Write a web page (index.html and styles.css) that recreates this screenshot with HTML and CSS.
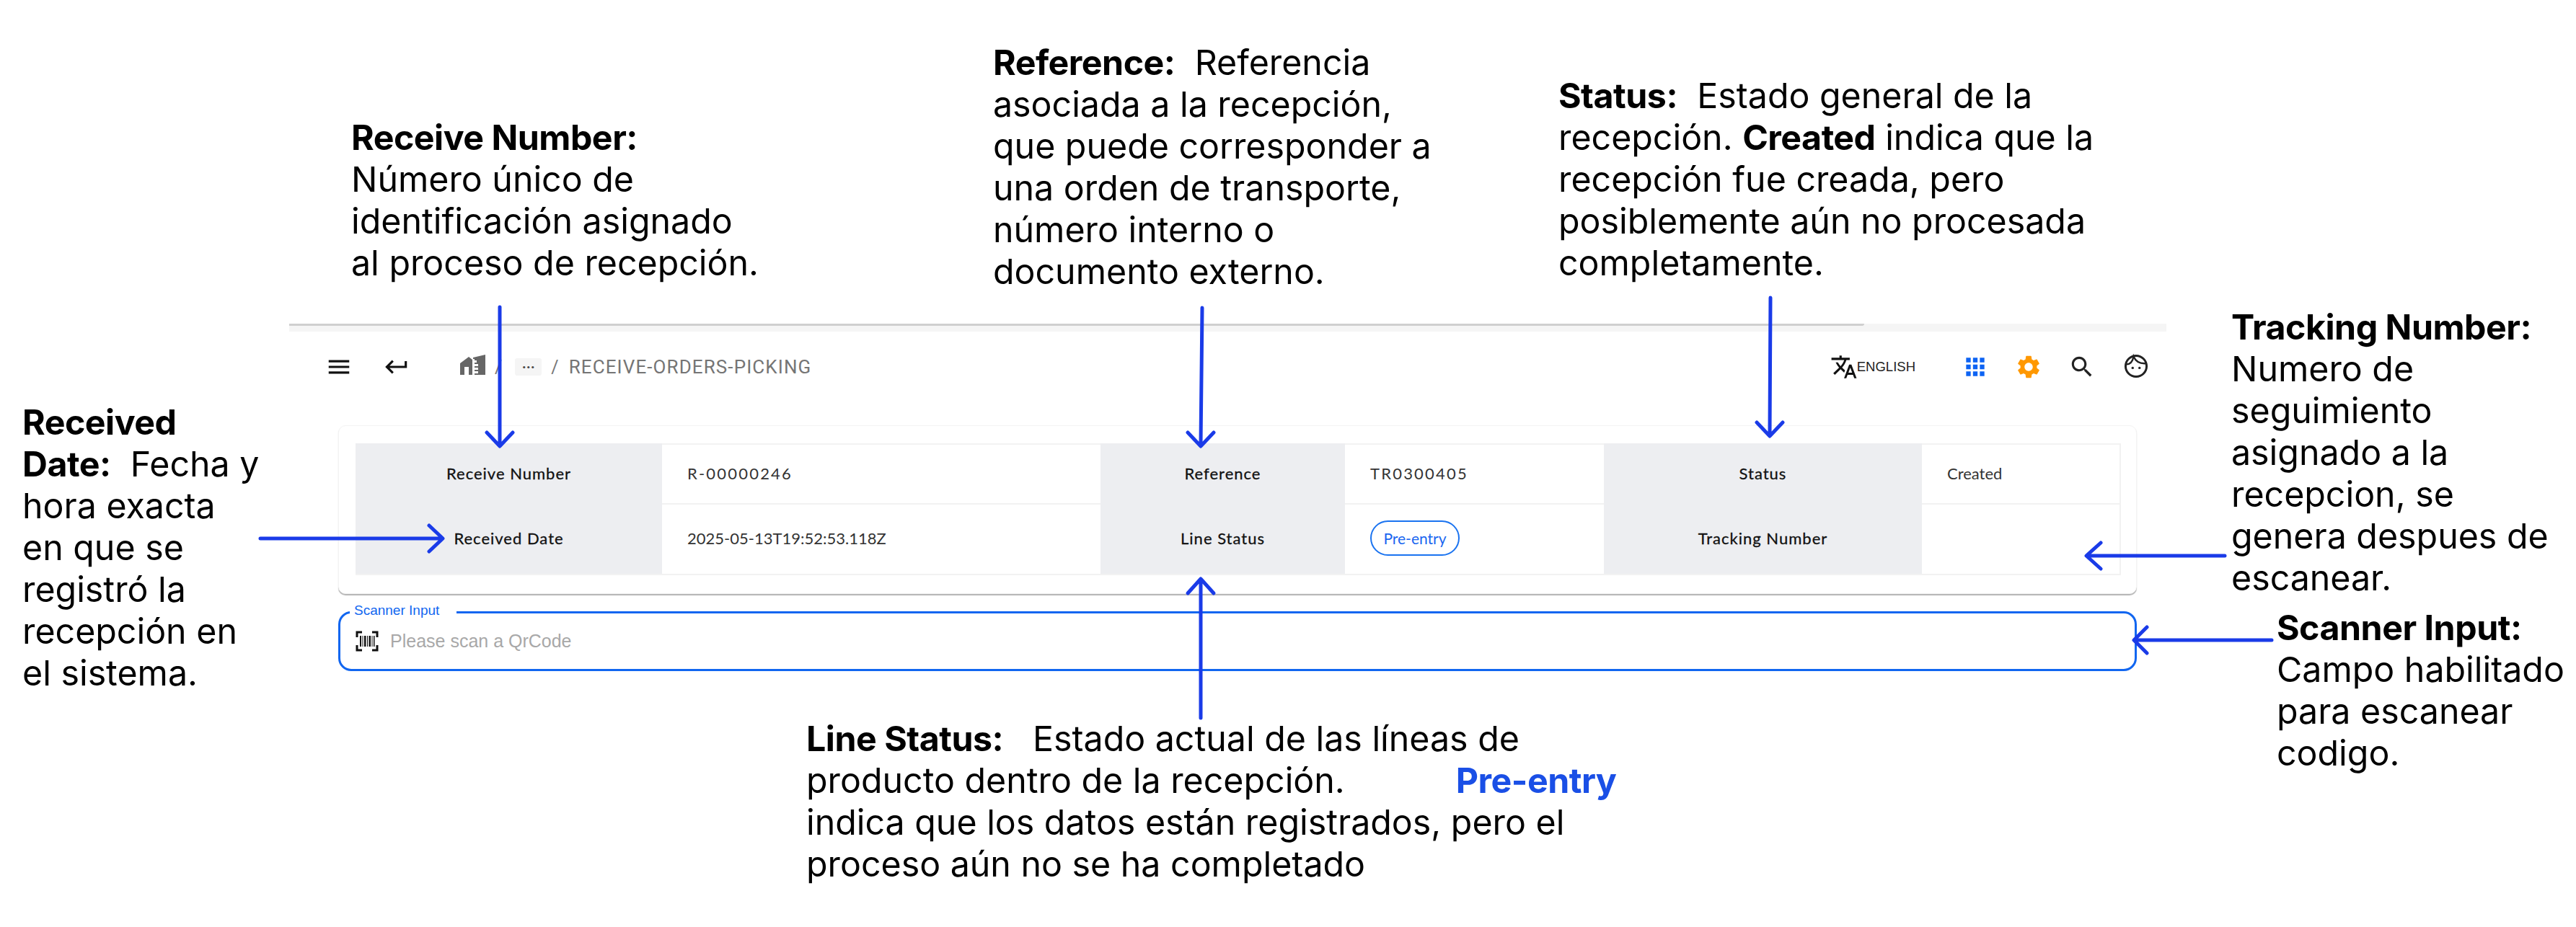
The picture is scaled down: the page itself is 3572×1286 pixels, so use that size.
FILE: index.html
```html
<!DOCTYPE html>
<html lang="es">
<head>
<meta charset="utf-8">
<title>Receive Orders Picking</title>
<link rel="stylesheet" href="styles.css">
</head>
<body>
<main class="canvas">
  <section class="app">
    <div class="topband"></div>
    <header class="nav">
      <svg class="icon" viewBox="0 0 24 24"><path d="M3 18h18v-2H3v2zm0-5h18v-2H3v2zm0-7v2h18V6H3z"/></svg>
      <svg class="icon back" viewBox="0 0 24 24"><path d="M19 7v4H5.83l3.58-3.59L8 6l-6 6 6 6 1.41-1.41L5.83 13H21V7z"/></svg>
      <svg class="home" viewBox="0 0 35 28"><path class="home-fill" d="M0 28V12L12 3l5 4v21h-5V17H6v11zM18 6l0-2L35 0v28H20v-2h5v-3h-5v-2h5v-3h-5v-2h5v-3h-5v-2h3v-3h-3V6z"/></svg>
      <span class="slash first">/</span>
      <span class="dots">···</span>
      <span class="slash">/</span>
      <span class="crumb">RECEIVE-ORDERS-PICKING</span>
      <div class="tools">
        <svg class="icon" viewBox="0 0 24 24"><path d="M12.87 15.07l-2.54-2.51.03-.03c1.74-1.94 2.98-4.17 3.71-6.53H17V4h-7V2H8v2H1v1.99h11.17C11.5 7.92 10.44 9.75 9 11.35 8.07 10.32 7.3 9.19 6.69 8h-2c.73 1.63 1.73 3.17 2.98 4.56l-5.09 5.02L4 19l5-5 3.11 3.11.76-2.04zM18.5 10h-2L12 22h2l1.12-3h4.75L21 22h2l-4.5-12zm-2.62 7l1.62-4.33L19.12 17h-3.24z"/></svg>
        <span class="lang">ENGLISH</span>
        <svg class="icon apps" viewBox="0 0 24 24"><path d="M4 8h4V4H4v4zm6 12h4v-4h-4v4zm-6 0h4v-4H4v4zm0-6h4v-4H4v4zm6 0h4v-4h-4v4zm6-10v4h4V4h-4zm-6 4h4V4h-4v4zm6 6h4v-4h-4v4zm0 6h4v-4h-4v4z"/></svg>
        <svg class="icon gear" viewBox="0 0 24 24"><path d="M19.14 12.94c.04-.3.06-.61.06-.94 0-.32-.02-.64-.07-.94l2.03-1.58c.18-.14.23-.41.12-.61l-1.92-3.32c-.12-.22-.37-.29-.59-.22l-2.39.96c-.5-.38-1.03-.7-1.62-.94l-.36-2.54c-.04-.24-.24-.41-.48-.41h-3.84c-.24 0-.43.17-.47.41l-.36 2.54c-.59.24-1.13.57-1.62.94l-2.39-.96c-.22-.08-.47 0-.59.22L2.74 8.87c-.12.21-.08.47.12.61l2.03 1.58c-.05.3-.09.63-.09.94s.02.64.07.94l-2.03 1.58c-.18.14-.23.41-.12.61l1.92 3.32c.12.22.37.29.59.22l2.39-.96c.5.38 1.03.7 1.62.94l.36 2.54c.05.24.24.41.48.41h3.84c.24 0 .44-.17.47-.41l.36-2.54c.59-.24 1.13-.56 1.62-.94l2.39.96c.22.08.47 0 .59-.22l1.92-3.32c.12-.22.07-.47-.12-.61l-2.01-1.58zM12 15.6c-1.98 0-3.6-1.62-3.6-3.6s1.62-3.6 3.6-3.6 3.6 1.62 3.6 3.6-1.62 3.6-3.6 3.6z"/></svg>
        <svg class="icon search" viewBox="0 0 24 24"><path d="M15.5 14h-.79l-.28-.27C15.41 12.59 16 11.11 16 9.5 16 5.91 13.09 3 9.5 3S3 5.91 3 9.5 5.91 16 9.5 16c1.61 0 3.09-.59 4.23-1.57l.27.28v.79l5 4.99L20.49 19l-4.99-5zm-6 0C7.01 14 5 11.99 5 9.5S7.01 5 9.5 5 14 7.01 14 9.5 11.99 14 9.5 14z"/></svg>
        <svg class="icon face" viewBox="0 0 24 24"><circle class="face-line" cx="12" cy="12" r="9.200"/><path class="face-line thin" d="M3.200 10.500C6.500 10.500 9 8 9.800 3.500C11.500 7.500 15 10 20.600 9.600"/><circle cx="9" cy="13.500" r="1.100"/><circle cx="15" cy="13.500" r="1.100"/></svg>
      </div>
    </header>

    <div class="card">
      <div class="table">
        <div class="cell label">Receive Number</div>
        <div class="cell value wide">R-00000246</div>
        <div class="cell label">Reference</div>
        <div class="cell value wide">TR0300405</div>
        <div class="cell label">Status</div>
        <div class="cell value end">Created</div>
        <div class="cell label last">Received Date</div>
        <div class="cell value last">2025-05-13T19:52:53.118Z</div>
        <div class="cell label last">Line Status</div>
        <div class="cell value last"><span class="pill">Pre-entry</span></div>
        <div class="cell label last">Tracking Number</div>
        <div class="cell value last end"></div>
      </div>
    </div>

    <div class="scanner">
      <span class="scanner-label">Scanner Input</span>
      <svg class="barcode" viewBox="0 0 32 29">
        <path class="corners" d="M9 2H2v7M23 2h7v7M9 27H2v-7M23 27h7v-7"/>
        <path class="bars" d="M6 7h2v15H6zM9.500 7h1v15h-1zM12 7h2.500v15H12zM16 7h1v15h-1zM18.500 7h2.500v15h-2.500zM22.500 7h1v15h-1zM25 7h1.500v15H25z"/>
      </svg>
      <span class="placeholder">Please scan a QrCode</span>
    </div>
  </section>

  <svg class="arrows" viewBox="0 0 3572 1286">
    <path d="M693 426V617M675 600L693 619L711 600"/>
    <path d="M1667 427L1665 617M1647 600L1665 619L1683 600"/>
    <path d="M2455 413L2454 603M2436 586L2454 605L2472 586"/>
    <path d="M361 747H612M595 729L614 747L595 765"/>
    <path d="M1665 996V805M1647 823L1665 803L1683 823"/>
    <path d="M3085 771H2895M2913 753L2893 771L2913 789"/>
    <path d="M3150 888H2961M2977 870L2959 888L2977 906"/>
  </svg>

  <p class="note n-receive"><b>Receive Number:</b><br>Número único de<br>identificación asignado<br>al proceso de recepción.</p>
  <p class="note n-reference"><b>Reference:</b>&nbsp; Referencia<br>asociada a la recepción,<br>que puede corresponder a<br>una orden de transporte,<br>número interno o<br>documento externo.</p>
  <p class="note n-status"><b>Status:</b>&nbsp; Estado general de la<br>recepción. <b>Created</b> indica que la<br>recepción fue creada, pero<br>posiblemente aún no procesada<br>completamente.</p>
  <p class="note n-date"><b>Received<br>Date:</b>&nbsp; Fecha y<br>hora exacta<br>en que se<br>registró la<br>recepción en<br>el sistema.</p>
  <p class="note n-tracking"><b>Tracking Number:</b><br>Numero de<br>seguimiento<br>asignado a la<br>recepcion, se<br>genera despues de<br>escanear.</p>
  <p class="note n-scanner"><b>Scanner Input:</b><br>Campo habilitado<br>para escanear<br>codigo.</p>
  <p class="note n-line"><b>Line Status:</b>&nbsp;&nbsp; Estado actual de las líneas de<br>producto dentro de la recepción.<span class="blue">Pre-entry</span><br>indica que los datos están registrados, pero el<br>proceso aún no se ha completado</p>
</main>
</body>
</html>
```
FILE: styles.css
```css
* { box-sizing: border-box; }
html, body { margin: 0; padding: 0; background: #fff; }
.canvas { position: relative; width: 3572px; height: 1286px; overflow: hidden; background: #fff; font-family: "Inter", "Liberation Sans", sans-serif; }

/* app screenshot placed on the canvas */
.app { position: absolute; left: 401px; top: 449px; width: 2603px; display: flex; flex-direction: column; align-items: flex-start; }
.topband { width: 100%; height: 11px; background: #f5f5f5; }
.topband::before { content: ""; display: block; width: 2184px; height: 3px; background: #cfcfcf; border-radius: 0 0 6px 0; }

.nav { width: 100%; height: 98px; padding: 0 23px 0 50px; display: flex; align-items: center; }
.icon { width: 38px; height: 38px; flex: none; fill: #111; }
.back { margin-left: 42px; }
.home { width: 35px; height: 28px; margin-left: 69px; margin-bottom: 6px; flex: none; }
.home-fill { fill: #666; }
.slash { font-family: "Roboto", sans-serif; font-size: 25px; color: #777; margin: 0 14px 0 13px; }
.slash.first { margin: 0 18px 0 13px; }
.dots { width: 37px; height: 24px; background: #f5f5f5; border-radius: 3px; display: flex; align-items: center; justify-content: center; font: 700 20px "Roboto", sans-serif; color: #444; }
.crumb { font: 400 26px "Roboto", sans-serif; letter-spacing: 1.100px; color: #757575; white-space: nowrap; }
.tools { margin-left: auto; display: flex; align-items: center; }
.lang { font: 400 18.500px "Liberation Sans", sans-serif; color: #222; margin-left: -1px; }
.apps { fill: #0d63f3; margin-left: 64px; }
.gear { fill: #ff9800; margin-left: 36px; }
.search { fill: #222; margin-left: 36px; }
.face { fill: #222; margin-left: 37px; margin-top: -2px; }
.face-line { fill: none; stroke: #222; stroke-width: 1.900; }
.face-line.thin { stroke-width: 1.500; }

.card { width: 2494px; margin: 32px 0 0 68px; padding: 24px 23px 25px; background: #fff; border: 1px solid #f3f3f3; border-radius: 10px; box-shadow: 0 2px 1px #b5b5b5; }
.table { display: grid; grid-template-columns: 425px 608px 339px 359px 441px 276px; grid-template-rows: 83px 100px; }
.cell { display: flex; align-items: center; padding-bottom: 3px; font: 400 22px "Lato", sans-serif; border-top: 2px solid #f2f2f2; }
.cell.last { border-bottom: 2px solid #f2f2f2; }
.label { background: #edeef1; justify-content: center; color: #111; letter-spacing: 1px; border-color: #edeef1; -webkit-text-stroke: 0.300px #111; }
.value { padding-left: 35px; color: #333; }
.value.wide { letter-spacing: 2.200px; }
.value.end { border-right: 2px solid #f2f2f2; }
.pill { display: inline-flex; align-items: center; justify-content: center; width: 124px; height: 49px; border: 2px solid #1a73f0; border-radius: 25px; color: #1a66f0; font-size: 21px; }

.scanner { position: relative; width: 2494px; height: 83px; margin: 24px 0 0 68px; border: 3px solid #1166f0; border-radius: 18px; display: flex; align-items: center; padding: 0 0 0 21px; }
.scanner-label { position: absolute; left: 13px; top: -15px; padding: 0 24px 0 6px; background: #fff; font: 400 19px "Liberation Sans", sans-serif; color: #1166f0; line-height: 22px; }
.barcode { width: 32px; height: 29px; flex: none; }
.corners { fill: none; stroke: #111; stroke-width: 3; }
.bars { fill: #111; }
.placeholder { margin-left: 16px; font: 400 25px "Liberation Sans", sans-serif; color: #a8a8a8; }

.arrows { position: absolute; left: 0; top: 0; width: 3572px; height: 1286px; fill: none; stroke: #1a3be8; stroke-width: 5; stroke-linecap: round; stroke-linejoin: round; pointer-events: none; }

.note { position: absolute; margin: 0; font-size: 48.300px; line-height: 58px; color: #000; white-space: nowrap; }
.note b { font-weight: 700; letter-spacing: -0.500px; }
.blue { display: inline-block; margin-left: 154px; letter-spacing: -0.500px; color: #1a4fe6; font-weight: 700; }
.n-receive { left: 487px; top: 162px; }
.n-reference { left: 1377px; top: 58px; }
.n-status { left: 2161px; top: 104px; }
.n-date { left: 31px; top: 557px; }
.n-tracking { left: 3094px; top: 425px; }
.n-scanner { left: 3157px; top: 842px; }
.n-line { left: 1118px; top: 996px; }
```
